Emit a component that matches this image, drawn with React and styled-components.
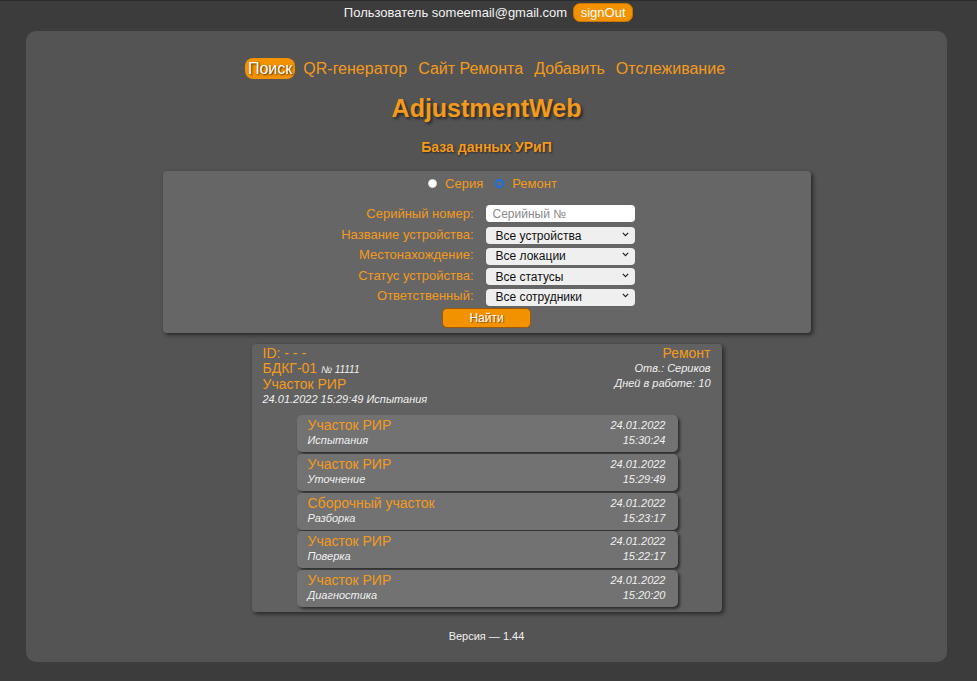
import React from "react";
import styled, { createGlobalStyle } from "styled-components";

const Global = createGlobalStyle`
  html, body { margin: 0; padding: 0; }
  body {
    background: #3c3c3c;
    font-family: "Liberation Sans", Arial, sans-serif;
    border-top: 1px solid #2c2c2c;
    min-height: 681px;
    box-sizing: border-box;
  }
`;

const ORANGE = "#f39a1c";

const TopBar = styled.header`
  height: 30px;
  display: flex;
  align-items: flex-start;
  justify-content: center;
  padding-top: 2px;
  box-sizing: border-box;
  gap: 6px;
  color: #f2f2f2;
  font-size: 13px;
`;

const UserText = styled.span`
  line-height: 20px;
`;

const SignOut = styled.button`
  background: #f39200;
  color: #fff;
  border: 1px solid #c87400;
  border-radius: 7px;
  font-family: inherit;
  font-size: 13px;
  height: 19px;
  width: 60px;
  padding: 0;
  line-height: 17px;
  cursor: pointer;
`;

const Panel = styled.main`
  margin: 0 30px 0 26px;
  background: #545454;
  border-radius: 10px;
  height: 631px;
  box-sizing: border-box;
  padding-top: 26px;
  display: flex;
  flex-direction: column;
  align-items: center;
`;

const Nav = styled.nav`
  display: flex;
  gap: 5px;
  align-items: center;
  height: 22px;
`;

const NavLink = styled.a`
  font-size: 16px;
  line-height: 21px;
  padding: 0 3px;
  border-radius: 8px;
  color: ${(p) => (p.$active ? "#fff" : ORANGE)};
  background: ${(p) => (p.$active ? "#f39200" : "transparent")};
  text-shadow: ${(p) => (p.$active ? "1px 1px 2px rgba(0,0,0,0.7)" : "none")};
  cursor: pointer;
`;

const Title = styled.h1`
  margin: 14px 0 0;
  font-size: 25px;
  line-height: 30px;
  font-weight: bold;
  color: ${ORANGE};
  text-shadow: 2px 2px 3px rgba(0, 0, 0, 0.55);
`;

const Subtitle = styled.h2`
  margin: 15px 0 0;
  font-size: 14px;
  line-height: 18px;
  font-weight: bold;
  color: ${ORANGE};
  text-shadow: 1px 1px 2px rgba(0, 0, 0, 0.55);
`;

const FormPanel = styled.section`
  margin-top: 15px;
  width: 648px;
  box-sizing: border-box;
  background: #666666;
  border-radius: 4px;
  box-shadow: 2px 2px 4px rgba(0, 0, 0, 0.55);
  padding: 4px 0 5px;
  display: flex;
  flex-direction: column;
  align-items: center;
`;

const RadioRow = styled.div`
  display: flex;
  gap: 12px;
  align-items: center;
  height: 16px;
  margin-bottom: 14px;
  padding-left: 12px;
`;

const RadioLabel = styled.label`
  display: flex;
  align-items: center;
  gap: 8px;
  color: ${ORANGE};
  font-size: 13px;
  cursor: pointer;
`;

const RadioDot = styled.span`
  width: 9px;
  height: 9px;
  border-radius: 50%;
  box-sizing: border-box;
  background: ${(p) => (p.$checked ? "#6a6a6a" : "#ffffff")};
  border: ${(p) => (p.$checked ? "2px solid #1a6ee8" : "1px solid #e0e0e0")};
`;

const FieldGrid = styled.div`
  width: 100%;
  display: grid;
  grid-template-columns: 311px 149px 1fr;
  column-gap: 12px;
  row-gap: 3.5px;
  align-items: center;
`;

const FieldLabel = styled.label`
  grid-column: 1;
  text-align: right;
  color: ${ORANGE};
  font-size: 13px;
  line-height: 17px;
`;

const TextInput = styled.input`
  grid-column: 2;
  height: 17px;
  box-sizing: border-box;
  border: none;
  border-radius: 4px;
  background: #ffffff;
  font-family: inherit;
  font-size: 12px;
  padding: 0 7px;
  outline: none;
  &::placeholder { color: #8a8a8a; }
`;

const SelectWrap = styled.div`
  grid-column: 2;
  position: relative;
  height: 17px;
`;

const Select = styled.select`
  appearance: none;
  width: 100%;
  height: 17px;
  box-sizing: border-box;
  border: none;
  border-radius: 4px;
  background: #efefef;
  color: #111;
  font-family: inherit;
  font-size: 12px;
  padding: 0 0 0 10px;
  outline: none;
`;

const Chevron = styled.svg`
  position: absolute;
  right: 6px;
  top: 6px;
  width: 7px;
  height: 5px;
  pointer-events: none;
`;

const FindButton = styled.button`
  margin-top: 4px;
  width: 89px;
  height: 20px;
  box-sizing: border-box;
  background: #f39200;
  border: 1px solid #9c5a06;
  border-radius: 5px;
  color: #fff;
  font-family: inherit;
  font-size: 12px;
  text-shadow: 1px 1px 1px rgba(0, 0, 0, 0.45);
  cursor: pointer;
`;

const Card = styled.article`
  margin-top: 11px;
  width: 470px;
  box-sizing: border-box;
  background: #616161;
  border-radius: 4px;
  box-shadow: 2px 2px 4px rgba(0, 0, 0, 0.55);
  padding: 2px 11px 5px;
`;

const CardHead = styled.div`
  display: flex;
  justify-content: space-between;
  margin-bottom: 8px;
`;

const Col = styled.div`
  display: flex;
  flex-direction: column;
  align-items: ${(p) => (p.$right ? "flex-end" : "flex-start")};
`;

const OrangeLine = styled.div`
  color: ${ORANGE};
  font-size: 14px;
  line-height: 15px;
`;

const Small = styled.span`
  color: #f0f0f0;
  font-style: italic;
  font-size: ${(p) => (p.$tiny ? "10px" : "11px")};
  line-height: 15px;
`;

const ItemList = styled.div`
  display: flex;
  flex-direction: column;
  gap: 1.8px;
  margin: 0 33px 0 34px;
`;

const Item = styled.div`
  height: 37px;
  box-sizing: border-box;
  background: #727272;
  border-radius: 5px;
  box-shadow: 2px 2px 3px rgba(0, 0, 0, 0.55);
  padding: 3px 12px 4px 11px;
  display: flex;
  justify-content: space-between;
`;

const Version = styled.footer`
  margin-top: 17px;
  color: #f0f0f0;
  font-size: 11px;
  line-height: 14px;
`;

const navItems = ["Поиск", "QR-генератор", "Сайт Ремонта", "Добавить", "Отслеживание"];

const fields = [
  { label: "Название устройства:", value: "Все устройства" },
  { label: "Местонахождение:", value: "Все локации" },
  { label: "Статус устройства:", value: "Все статусы" },
  { label: "Ответственный:", value: "Все сотрудники" },
];

const history = [
  { place: "Участок РИР", op: "Испытания", date: "24.01.2022", time: "15:30:24" },
  { place: "Участок РИР", op: "Уточнение", date: "24.01.2022", time: "15:29:49" },
  { place: "Сборочный участок", op: "Разборка", date: "24.01.2022", time: "15:23:17" },
  { place: "Участок РИР", op: "Поверка", date: "24.01.2022", time: "15:22:17" },
  { place: "Участок РИР", op: "Диагностика", date: "24.01.2022", time: "15:20:20" },
];

export default function App() {
  return (
    <>
      <Global />
      <TopBar>
        <UserText>Пользователь someemail@gmail.com</UserText>
        <SignOut>signOut</SignOut>
      </TopBar>
      <Panel>
        <Nav>
          {navItems.map((n, i) => (
            <NavLink key={n} $active={i === 0}>
              {n}
            </NavLink>
          ))}
        </Nav>
        <Title>AdjustmentWeb</Title>
        <Subtitle>База данных УРиП</Subtitle>
        <FormPanel>
          <RadioRow>
            <RadioLabel>
              <RadioDot />
              Серия
            </RadioLabel>
            <RadioLabel>
              <RadioDot $checked />
              Ремонт
            </RadioLabel>
          </RadioRow>
          <FieldGrid>
            <FieldLabel>Серийный номер:</FieldLabel>
            <TextInput placeholder="Серийный №" />
            {fields.map((f) => (
              <React.Fragment key={f.label}>
                <FieldLabel>{f.label}</FieldLabel>
                <SelectWrap>
                  <Select defaultValue={f.value}>
                    <option>{f.value}</option>
                  </Select>
                  <Chevron viewBox="0 0 7 5">
                    <path d="M0.8 0.8 L3.5 3.6 L6.2 0.8" fill="none" stroke="#222" strokeWidth="1.2" />
                  </Chevron>
                </SelectWrap>
              </React.Fragment>
            ))}
          </FieldGrid>
          <FindButton>Найти</FindButton>
        </FormPanel>
        <Card>
          <CardHead>
            <Col>
              <OrangeLine>ID: - - -</OrangeLine>
              <OrangeLine>
                БДКГ-01 <Small $tiny>№ 11111</Small>
              </OrangeLine>
              <OrangeLine>Участок РИР</OrangeLine>
              <Small>24.01.2022 15:29:49 Испытания</Small>
            </Col>
            <Col $right>
              <OrangeLine>Ремонт</OrangeLine>
              <Small>Отв.: Сериков</Small>
              <Small>Дней в работе: 10</Small>
            </Col>
          </CardHead>
          <ItemList>
            {history.map((h, i) => (
              <Item key={i}>
                <Col>
                  <OrangeLine>{h.place}</OrangeLine>
                  <Small>{h.op}</Small>
                </Col>
                <Col $right>
                  <Small>{h.date}</Small>
                  <Small>{h.time}</Small>
                </Col>
              </Item>
            ))}
          </ItemList>
        </Card>
        <Version>Версия — 1.44</Version>
      </Panel>
    </>
  );
}
